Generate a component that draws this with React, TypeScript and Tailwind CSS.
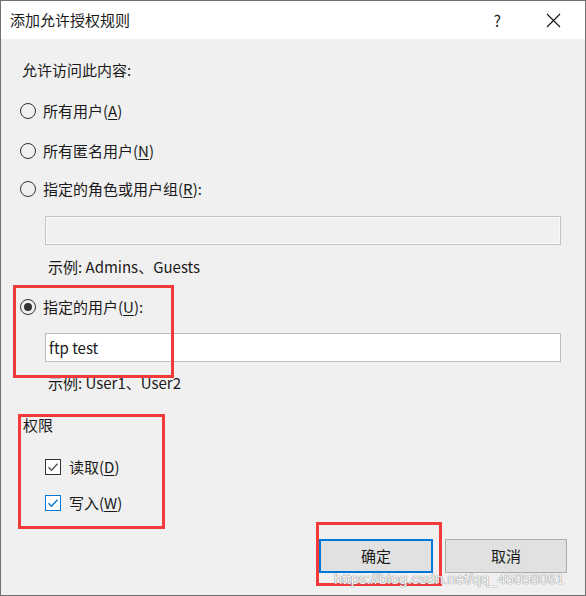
const FONT = { fontFamily: '"Microsoft YaHei UI", "Noto Sans CJK SC", "Noto Sans", sans-serif' };

function Radio({ checked, label, mnemonic, colon }: { checked?: boolean; label: string; mnemonic: string; colon?: boolean }) {
  return (
    <div className="flex h-5 items-center">
      <span className="ml-[19px] flex h-4 w-4 items-center justify-center rounded-full border border-[#333] bg-[#f0f0f0]">
        {checked && <span className="h-2 w-2 rounded-full bg-[#333]" />}
      </span>
      <span className="ml-[7px]">
        {label}(<span className="underline underline-offset-2">{mnemonic}</span>){colon ? ":" : ""}
      </span>
    </div>
  );
}

function Check({ blue, label, mnemonic }: { blue?: boolean; label: string; mnemonic: string }) {
  return (
    <div className="flex h-5 items-center">
      <span
        className={`ml-[44px] flex h-4 w-4 items-center justify-center border bg-white ${blue ? "border-[#0078d7]" : "border-[#333]"}`}
      >
        <svg width="12" height="12" viewBox="0 0 12 12">
          <path d="M1.5 6.2 L4.5 9.2 L10.5 2.8" fill="none" stroke={blue ? "#0078d7" : "#555"} strokeWidth="1.4" />
        </svg>
      </span>
      <span className="ml-[8px]">
        {label}(<span className="underline underline-offset-2">{mnemonic}</span>)
      </span>
    </div>
  );
}

export default function App() {
  return (
    <div
      className="relative h-[596px] w-[586px] overflow-hidden border border-[#707070] bg-[#f0f0f0] text-[15px] leading-5 text-[#1a1a1a]"
      style={FONT}
    >
      {/* title bar */}
      <div className="flex h-[38px] items-center bg-white">
        <span className="ml-[9px]">添加允许授权规则</span>
        <span className="ml-auto mr-[45px] text-[16px] text-[#222]">?</span>
        <svg className="mr-[24px]" width="15" height="15" viewBox="0 0 15 15">
          <path d="M1 1 L14 14 M14 1 L1 14" stroke="#111" strokeWidth="1.1" />
        </svg>
      </div>

      <div className="pt-[21px]">
        <div className="ml-[21px]">允许访问此内容:</div>

        <div className="mt-[21px]">
          <Radio label="所有用户" mnemonic="A" />
        </div>
        <div className="mt-[20px]">
          <Radio label="所有匿名用户" mnemonic="N" />
        </div>
        <div className="mt-[18px]">
          <Radio label="指定的角色或用户组" mnemonic="R" colon />
        </div>

        <div className="ml-[44px] mr-[24px] mt-[17px] h-[29px] border border-[#c4c4c4] bg-[#f0f0f0] shadow-[inset_0_0_0_1px_#fafafa]" />
        <div className="ml-[47px] mt-[12px]">示例: Admins、Guests</div>

        <div className="mt-[20px]">
          <Radio checked label="指定的用户" mnemonic="U" colon />
        </div>
        <div className="ml-[44px] mr-[24px] mt-[16px] flex h-[29px] items-center border border-[#bdbdbd] bg-white pl-[3px]">
          ftp test
        </div>
        <div className="ml-[47px] mt-[11px]">示例: User1、User2</div>

        <div className="ml-[22px] mt-[22px]">权限</div>
        <div className="mt-[22px]">
          <Check label="读取" mnemonic="D" />
        </div>
        <div className="mt-[16px]">
          <Check blue label="写入" mnemonic="W" />
        </div>

        <div className="mt-[26px] flex justify-end gap-[12px] pr-[18px]">
          <button className="h-[34px] w-[114px] border-2 border-[#0078d7] bg-[#e1e1e1] text-[15px]">确定</button>
          <button className="h-[34px] w-[122px] border border-[#adadad] bg-[#e1e1e1] text-[15px]">取消</button>
        </div>
      </div>

      {/* annotation boxes */}
      <div className="pointer-events-none absolute left-[12px] top-[284px] h-[93px] w-[161px] border-[3px] border-[#f23a3a]" />
      <div className="pointer-events-none absolute left-[17px] top-[413px] h-[115px] w-[147px] border-[3px] border-[#f23a3a]" />
      <div className="pointer-events-none absolute left-[315px] top-[521px] h-[64px] w-[126px] border-[3px] border-[#f23a3a]" />

      {/* watermark */}
      <div
        className="pointer-events-none absolute left-[333px] top-[566px] whitespace-nowrap text-[15px] leading-6 text-[#f4f4f4] [text-shadow:0_0_1px_#888,0_0_1px_#888]"
        style={{ fontFamily: '"Liberation Sans", Arial, sans-serif' }}
      >
        https://blog.csdn.net/qq_45058061
      </div>
    </div>
  );
}
